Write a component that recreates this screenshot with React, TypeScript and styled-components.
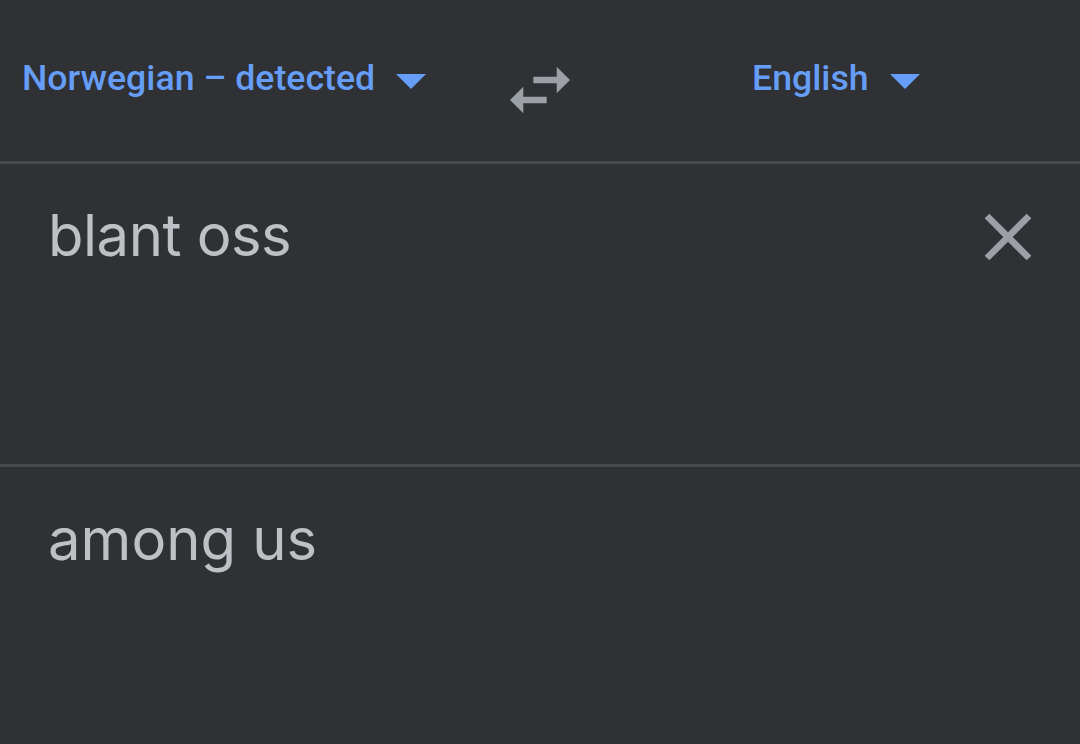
import React from "react";
import styled, { createGlobalStyle } from "styled-components";

const Global = createGlobalStyle`
  html, body { margin: 0; padding: 0; background: #303134; }
  body { width: 1080px; height: 744px; overflow: hidden; }
`;

const Page = styled.div`
  width: 1080px;
  height: 744px;
  background: #303134;
  display: flex;
  flex-direction: column;
`;

const Header = styled.div`
  height: 161px;
  display: grid;
  grid-template-columns: 500px 80px 500px;
  align-items: start;
  border-bottom: 3px solid #46484b;
  box-sizing: content-box;
`;

const LangButton = styled.div<{ $pad: number }>`
  display: flex;
  align-items: center;
  gap: 21px;
  padding-left: ${(p) => p.$pad}px;
  padding-top: 56px;
  height: 44px;
  font-family: Roboto, "Noto Sans", sans-serif;
  font-weight: 500;
  font-size: 35.7px;
  color: #669df6;
  white-space: nowrap;
`;

const Caret = styled.span`
  width: 0;
  height: 0;
  border-left: 15px solid transparent;
  border-right: 15px solid transparent;
  border-top: 15px solid #669df6;
  margin-top: 6px;
`;

const SwapWrap = styled.div`
  padding-top: 50px;
  width: 80px;
  height: 80px;
  color: #9aa0a6;
`;

const Section = styled.div<{ $h?: number }>`
  position: relative;
  ${(p) => (p.$h ? `height: ${p.$h}px;` : "flex: 1;")}
  padding: 0 48px;
  box-sizing: border-box;
  ${(p) => (p.$h ? "border-bottom: 3px solid #46484b;" : "")}
`;

const BigText = styled.div<{ $top: number; $ls: number }>`
  padding-top: ${(p) => p.$top}px;
  font-family: Inter, "Noto Sans", sans-serif;
  font-weight: 400;
  font-size: 58px;
  line-height: 70px;
  color: #bdc1c6;
  letter-spacing: ${(p) => p.$ls}px;
`;

const ClearBtn = styled.div`
  position: absolute;
  left: 968px;
  top: 33px;
  width: 80px;
  height: 80px;
  color: #9aa0a6;
`;

export default function App() {
  return (
    <Page>
      <Global />
      <Header>
        <LangButton $pad={22}>
          Norwegian – detected <Caret />
        </LangButton>
        <SwapWrap>
          <svg width="80" height="80" viewBox="0 0 24 24" fill="currentColor">
            <path d="M6.99 11L3 15l3.99 4v-3H14v-2H6.99v-3zM21 9l-3.99-4v3H10v2h7.01v3L21 9z" />
          </svg>
        </SwapWrap>
        <LangButton $pad={172}>
          English <Caret />
        </LangButton>
      </Header>
      <Section $h={303}>
        <BigText $top={36} $ls={-0.5}>blant oss</BigText>
        <ClearBtn>
          <svg width="80" height="80" viewBox="0 0 24 24" fill="currentColor">
            <path d="M19 6.41L17.59 5 12 10.59 6.41 5 5 6.41 10.59 12 5 17.59 6.41 19 12 13.41 17.59 19 19 17.59 13.41 12z" />
          </svg>
        </ClearBtn>
      </Section>
      <Section>
        <BigText $top={37} $ls={0}>among us</BigText>
      </Section>
    </Page>
  );
}
